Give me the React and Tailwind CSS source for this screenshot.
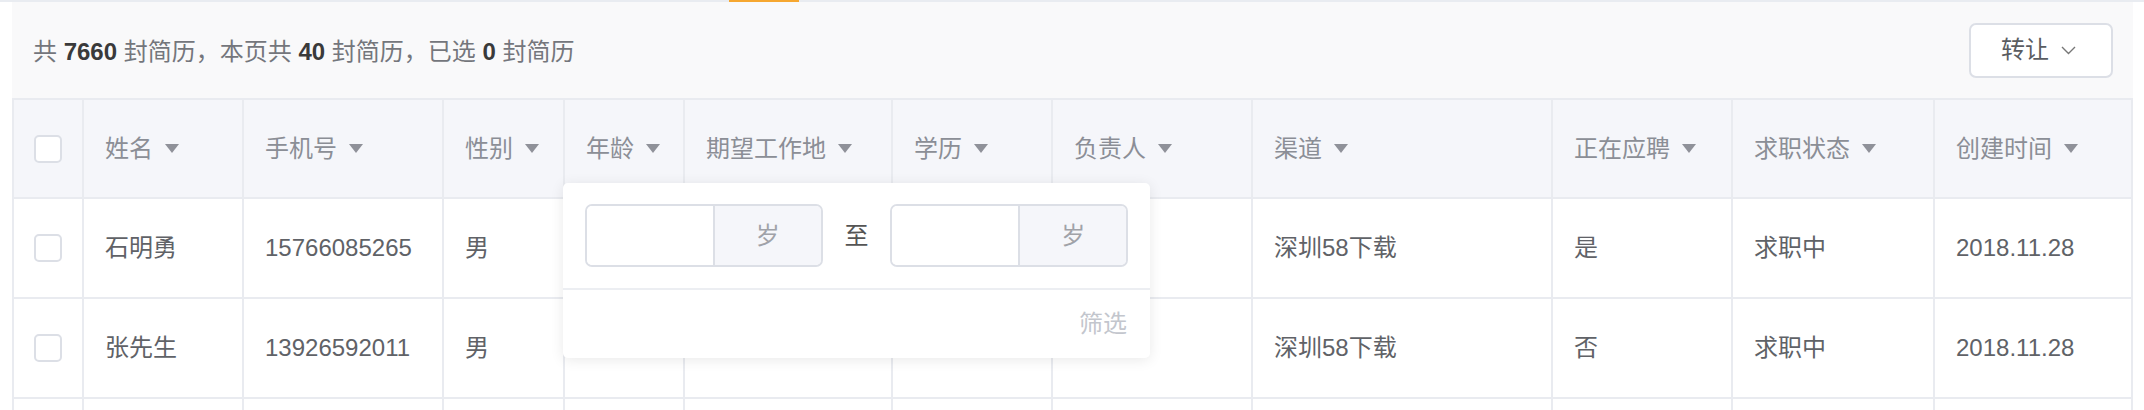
import React from 'react';

const FONT = { fontFamily: '"Liberation Sans", "Noto Sans CJK SC", sans-serif' };

const COLUMNS = ['姓名', '手机号', '性别', '年龄', '期望工作地', '学历', '负责人', '渠道', '正在应聘', '求职状态', '创建时间'];

const ROWS = [
  ['石明勇', '15766085265', '男', '', '', '', '', '深圳58下载', '是', '求职中', '2018.11.28'],
  ['张先生', '13926592011', '男', '', '', '', '', '深圳58下载', '否', '求职中', '2018.11.28'],
  ['', '', '', '', '', '', '', '', '', '', ''],
];

const GRID = 'grid grid-cols-[70px_160px_200px_121px_120px_208px_160px_200px_300px_180px_202px_198px]';

const SortArrow = () => (
  <svg width="14" height="9" viewBox="0 0 14 9" className="ml-[12px] shrink-0">
    <polygon points="0,0 14,0 7,9" fill="#8f9199" />
  </svg>
);

const Checkbox = () => (
  <div className="w-[28px] h-[28px] rounded-[5px] border-2 border-[#dcdfe6] bg-white" />
);

const RangeInput = () => (
  <div className="flex w-[238px] h-[63px] rounded-[7px] border-2 border-[#dcdfe6] overflow-hidden">
    <div className="w-[128px] bg-white border-r-2 border-[#dcdfe6]" />
    <div className="flex-1 bg-[#f5f6fa] flex items-center justify-center text-[24px] text-[#a0a2a8]">岁</div>
  </div>
);

export default function App() {
  return (
    <div className="relative w-[2144px] h-[410px] bg-white overflow-hidden" style={FONT}>
      {/* top rule with active tab mark */}
      <div className="flex h-[2px] bg-[#e9ecf1]">
        <div className="w-[729px]" />
        <div className="w-[70px] bg-[#f6a730]" />
      </div>

      <div className="ml-[12px] w-[2121px]">
        {/* toolbar */}
        <div className="h-[98px] bg-[#f9f9fa] border-b-2 border-[#e9ebf0] flex items-center justify-between pl-[21px] pr-[20px]">
          <p className="text-[24px] text-[#74767c] pt-[4px]">
            共 <b className="font-bold text-[#3a3a3a]">7660</b> 封简历，本页共 <b className="font-bold text-[#3a3a3a]">40</b> 封简历，已选 <b className="font-bold text-[#3a3a3a]">0</b> 封简历
          </p>
          <button className="w-[144px] h-[55px] rounded-[7px] border-2 border-[#dcdfe6] bg-white flex items-center pl-[30px] text-[24px] text-[#5a5c61]">
            转让
            <svg width="15" height="9" viewBox="0 0 15 9" className="ml-[12px]">
              <polyline points="1,1 7.5,7.5 14,1" fill="none" stroke="#777" strokeWidth="1.4" />
            </svg>
          </button>
        </div>

        {/* table */}
        <div className="border-l-2 border-[#e9ebf0]">
          <div className={`${GRID} h-[99px] bg-[#f5f6fa]`}>
            <div className="flex items-center justify-center border-r-2 border-b-2 border-[#e9ebf0]">
              <Checkbox />
            </div>
            {COLUMNS.map((c) => (
              <div key={c} className="flex items-center pl-[21px] border-r-2 border-b-2 border-[#e9ebf0] text-[24px] text-[#8b8e96]">
                {c}
                <SortArrow />
              </div>
            ))}
          </div>
          {ROWS.map((r, i) => (
            <div key={i} className={`${GRID} h-[100px] bg-white`}>
              <div className="flex items-center justify-center border-r-2 border-b-2 border-[#e9ebf0]">
                <Checkbox />
              </div>
              {r.map((v, j) => (
                <div key={j} className="flex items-center pl-[21px] border-r-2 border-b-2 border-[#e9ebf0] text-[24px] text-[#606267]">
                  {v}
                </div>
              ))}
            </div>
          ))}
        </div>
      </div>

      {/* age filter popover */}
      <div className="absolute left-[563px] top-[183px] w-[587px] h-[175px] bg-white rounded-[5px] shadow-[0_2px_14px_rgba(0,0,0,0.09)] z-10 flex flex-col">
        <div className="flex items-center px-[22px] pt-[21px] pb-[21px] border-b-2 border-[#eceef2]">
          <RangeInput />
          <div className="w-[68px] text-center text-[24px] text-[#555]">至</div>
          <RangeInput />
        </div>
        <div className="flex-1 flex items-center justify-end pr-[23px] text-[24px] text-[#c3c6cd]">筛选</div>
      </div>
    </div>
  );
}
